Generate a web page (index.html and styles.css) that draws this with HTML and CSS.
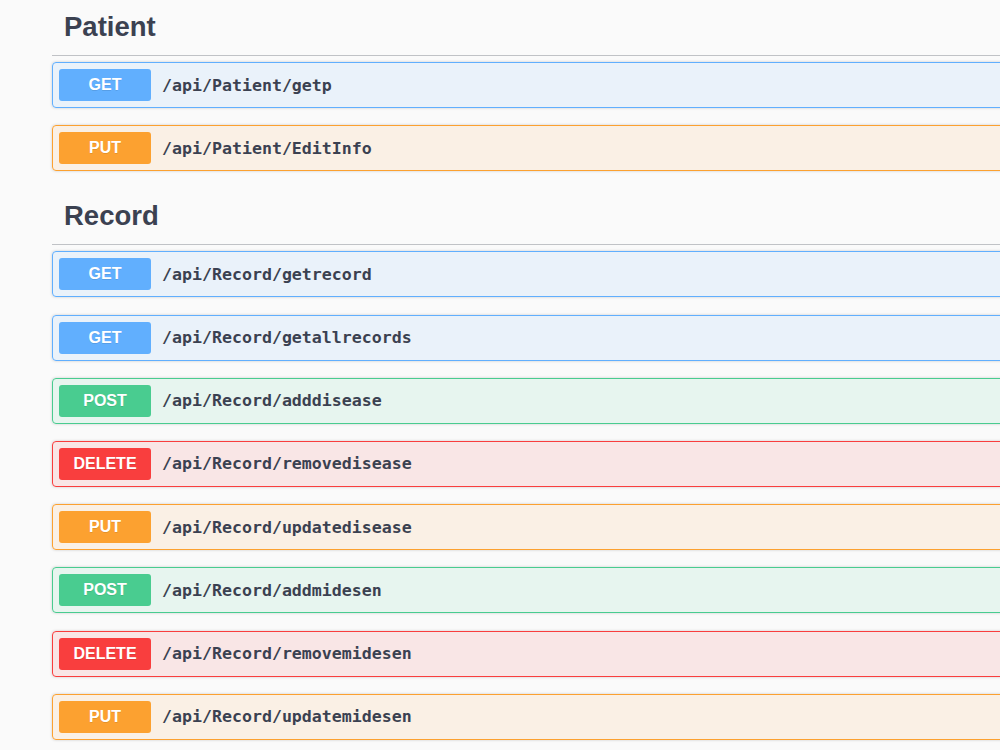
FILE: index.html
```html
<!DOCTYPE html>
<html lang="en">
  <head>
    <meta charset="UTF-8" />
    <meta name="viewport" content="width=device-width, initial-scale=1.0" />
    <title>API Docs</title>
    <link rel="stylesheet" href="styles.css">
  </head>
  <body>
    <div class="wrapper">
      <section class="tag-section">
        <h3 class="tag">Patient</h3>
        <div class="op op-get"><span class="method">GET</span><span class="path">/api/Patient/getp</span></div>
        <div class="op op-put"><span class="method">PUT</span><span class="path">/api/Patient/EditInfo</span></div>
      </section>
      <section class="tag-section">
        <h3 class="tag">Record</h3>
        <div class="op op-get"><span class="method">GET</span><span class="path">/api/Record/getrecord</span></div>
        <div class="op op-get"><span class="method">GET</span><span class="path">/api/Record/getallrecords</span></div>
        <div class="op op-post"><span class="method">POST</span><span class="path">/api/Record/adddisease</span></div>
        <div class="op op-delete"><span class="method">DELETE</span><span class="path">/api/Record/removedisease</span></div>
        <div class="op op-put"><span class="method">PUT</span><span class="path">/api/Record/updatedisease</span></div>
        <div class="op op-post"><span class="method">POST</span><span class="path">/api/Record/addmidesen</span></div>
        <div class="op op-delete"><span class="method">DELETE</span><span class="path">/api/Record/removemidesen</span></div>
        <div class="op op-put"><span class="method">PUT</span><span class="path">/api/Record/updatemidesen</span></div>
      </section>
    </div>
  </body>
</html>
```

FILE: styles.css
```css
body {
  margin: 0;
  background-color: #fafafa;
  font-family: "Liberation Sans", Arial, sans-serif;
  overflow: hidden;
}
.wrapper {
  width: 1100px;
  margin: -1px 0 0 52px;
}
.tag {
  margin: 0 0 6px;
  padding: 12px 20px 12px 12px;
  font-size: 27.5px;
  line-height: 32px;
  font-weight: bold;
  color: #3b4151;
  border-bottom: 1px solid rgba(59, 65, 81, 0.3);
}
.op {
  display: flex;
  align-items: center;
  height: 44px;
  padding: 0 6px;
  margin-bottom: 17.2px;
  border: 1px solid;
  border-radius: 4px;
  box-shadow: 0 0 3px rgba(0, 0, 0, 0.19);
}
.method {
  width: 92px;
  height: 32px;
  line-height: 32px;
  text-align: center;
  border-radius: 3px;
  color: #fff;
  font-size: 16px;
  font-weight: bold;
  text-shadow: 0 1px 0 rgba(0, 0, 0, 0.1);
}
.path {
  padding: 0 11px;
  font-family: "DejaVu Sans Mono", monospace;
  font-size: 16.6px;
  font-weight: bold;
  color: #3b4151;
}
.op-get { background: rgba(97, 175, 254, 0.1); border-color: #61affe; }
.op-get .method { background: #61affe; }
.op-put { background: rgba(252, 161, 48, 0.1); border-color: #fca130; }
.op-put .method { background: #fca130; }
.op-post { background: rgba(73, 204, 144, 0.1); border-color: #49cc90; }
.op-post .method { background: #49cc90; }
.op-delete { background: rgba(249, 62, 62, 0.1); border-color: #f93e3e; }
.op-delete .method { background: #f93e3e; }
```
